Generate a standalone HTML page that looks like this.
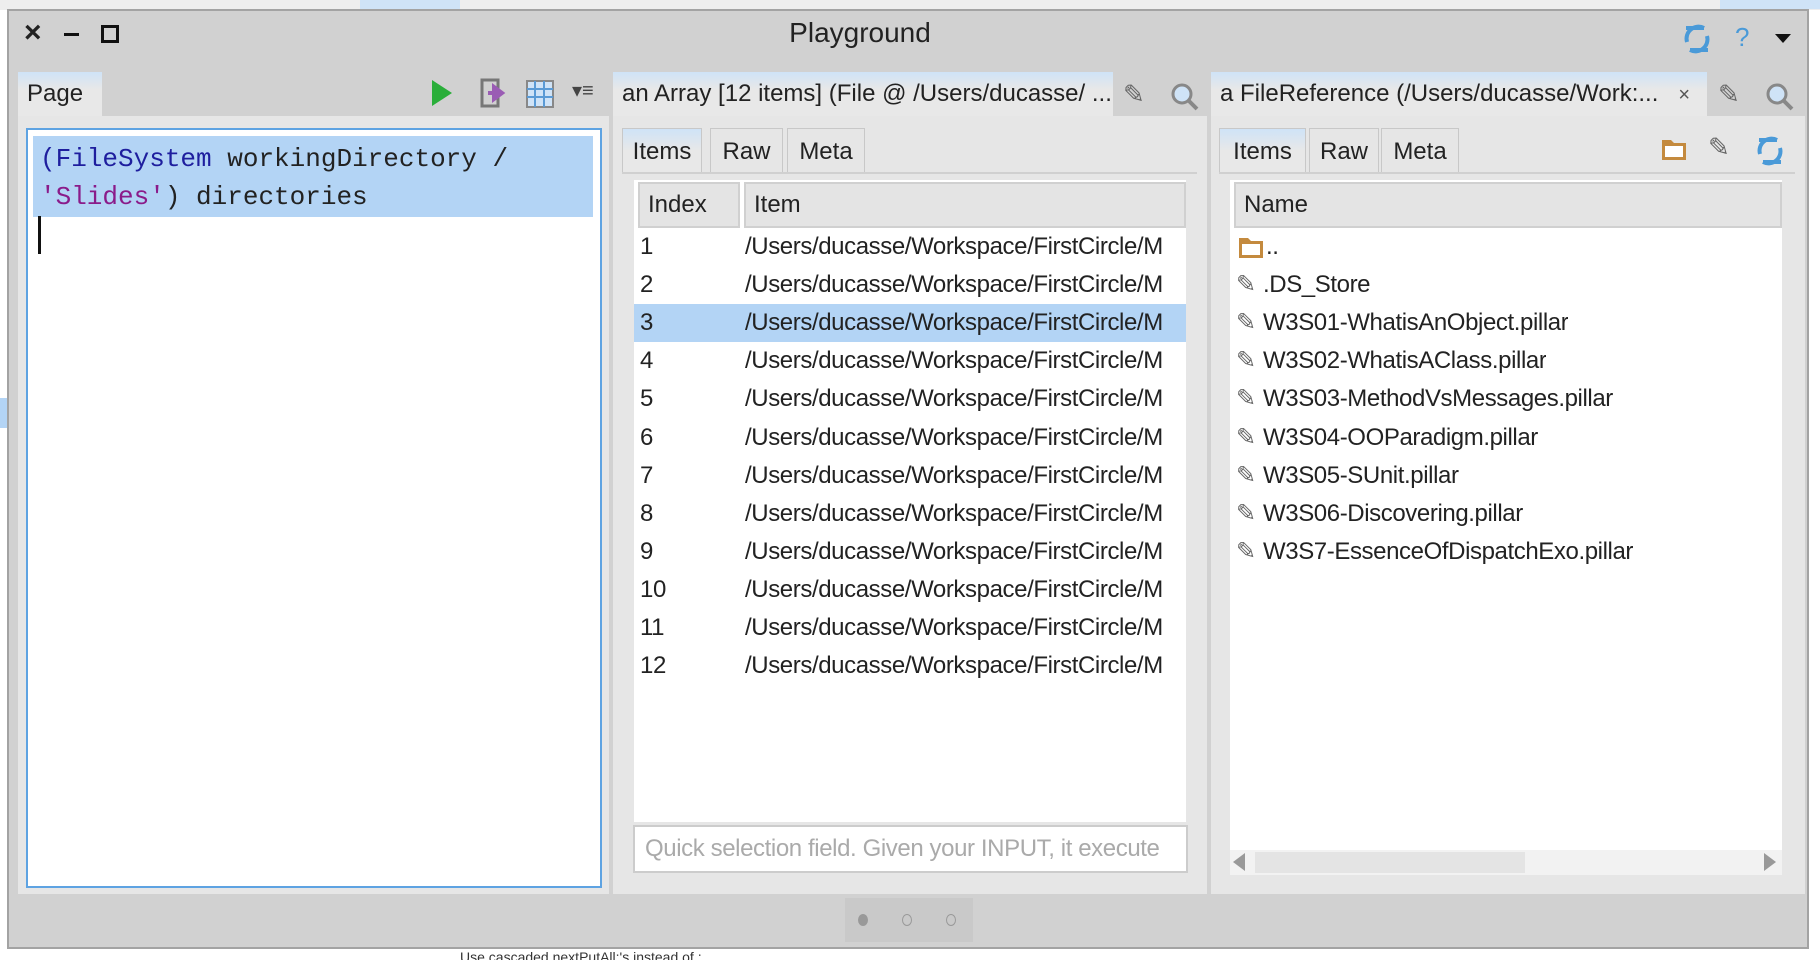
<!DOCTYPE html>
<html><head><meta charset="utf-8"><style>
*{box-sizing:border-box;margin:0;padding:0}
body{width:1820px;height:960px;overflow:hidden;background:#fff;font-family:"Liberation Sans",sans-serif;position:relative;color:#222}
.a{position:absolute}
.win{left:7px;top:9px;width:1802px;height:940px;background:#d1d1d1;border:2px solid #a3a3a3}
.panel{background:#e6e6e6}
.tab{background:linear-gradient(#cfe3f7,#e8e8e8 40%);font-size:24px;line-height:44px;padding-left:9px;white-space:nowrap;overflow:hidden}
.sub{font-size:24px;line-height:46px;text-align:center;border:1px solid #c8c8c8;background:#e6e6e6}
.sub.on{background:linear-gradient(#cfe3f7,#e8e8e8 50%)}
.row{position:absolute;font-size:24px;height:38px;line-height:38px;white-space:nowrap;overflow:hidden;letter-spacing:-0.4px}
.hdr{background:#e4e4e4;border:2px solid #d0d0d0;font-size:24px;line-height:42px;padding-left:8px}
</style></head><body>
<div class="a" style="left:0;top:0;width:1820px;height:10px;background:#eee"></div>
<div class="a" style="left:360px;top:0;width:100px;height:9px;background:#cfe3f7"></div>
<div class="a" style="left:1720px;top:0;width:100px;height:9px;background:#cfe3f7"></div>
<div class="a" style="left:0;top:398px;width:7px;height:30px;background:#b3d4f5"></div>
<div class="a" style="left:460px;top:949px;width:660px;height:11px;font-size:14px;overflow:hidden;color:#333">Use cascaded nextPutAll:'s instead of ;</div>

<div class="a win"></div>
<div class="a" style="left:24px;top:16px;font-size:30px;font-weight:bold">×</div>
<div class="a" style="left:64px;top:33px;width:15px;height:3px;background:#111"></div>
<div class="a" style="left:101px;top:25px;width:18px;height:18px;border:3px solid #111"></div>
<div class="a" style="left:760px;top:17px;width:200px;text-align:center;font-size:28px">Playground</div>
<svg class="a" style="left:1682px;top:22px" width="30" height="34" viewBox="0 0 30 34"><path d="M22 6A12 12 0 0 0 5 20M8 28A12 12 0 0 0 25 14M4 6h18M8 28h18" stroke="#4a9ad8" stroke-width="4" fill="none"/></svg>
<div class="a" style="left:1735px;top:22px;font-size:26px;color:#4a9ad8">?</div>
<svg class="a" style="left:1775px;top:34px" width="16" height="10"><path d="M0 0h16L8 9z" fill="#111"/></svg>

<div class="a panel" style="left:18px;top:116px;width:591px;height:778px"></div>
<div class="a tab" style="left:18px;top:72px;width:84px;height:44px">Page</div>
<svg class="a" style="left:430px;top:78px" width="24" height="30"><path d="M2 2L22 15L2 28z" fill="#2aae3a"/></svg>
<svg class="a" style="left:480px;top:78px" width="28" height="30"><rect x="2" y="2" width="16" height="26" fill="none" stroke="#777" stroke-width="3"/><path d="M8 15h10M14 9l8 6-8 6z" stroke="#9a5cb4" stroke-width="4" fill="#9a5cb4"/></svg>
<svg class="a" style="left:526px;top:80px" width="28" height="28"><rect x="1" y="1" width="26" height="26" fill="#cfe3f7" stroke="#888" stroke-width="2"/><path d="M9 1v26M18 1v26M1 9h26M1 17h26" stroke="#5a9ad5" stroke-width="2"/></svg>
<div class="a" style="left:572px;top:78px;font-size:20px;color:#444">▾≡</div>
<div class="a" style="left:26px;top:128px;width:576px;height:760px;background:#fff;border:2px solid #5ea3e2"></div>
<div class="a" style="left:33px;top:136px;width:560px;height:81px;background:#b3d4f5"></div>
<div class="a" style="left:40px;top:140px;font-family:'Liberation Mono',monospace;font-size:26px;line-height:38px;white-space:pre"><span style="color:#1e1e9e">(FileSystem</span> workingDirectory /
<span style="color:#8a1b8a">'Slides'</span>) directories</div>
<div class="a" style="left:38px;top:216px;width:3px;height:38px;background:#111"></div>

<div class="a panel" style="left:613px;top:116px;width:594px;height:778px"></div>
<div class="a tab" style="left:613px;top:72px;width:500px;height:44px">an Array [12 items] (File @ /Users/ducasse/ ...</div>
<div class="a" style="left:1123px;top:79px;font-size:26px;color:#666">✎</div>
<svg class="a" style="left:1170px;top:82px" width="30" height="30"><circle cx="12" cy="12" r="9" fill="#cfe3f7" stroke="#888" stroke-width="3"/><path d="M18 18l9 9" stroke="#888" stroke-width="4"/></svg>
<div class="a sub on" style="left:622px;top:128px;width:80px;height:46px">Items</div>
<div class="a sub" style="left:710px;top:128px;width:73px;height:46px">Raw</div>
<div class="a sub" style="left:787px;top:128px;width:78px;height:46px">Meta</div>
<div class="a" style="left:622px;top:172px;width:575px;height:2px;background:#d0d0d0"></div>
<div class="a" style="left:634px;top:180px;width:552px;height:642px;background:#fff"></div>
<div class="a hdr" style="left:638px;top:182px;width:102px;height:46px">Index</div>
<div class="a hdr" style="left:744px;top:182px;width:442px;height:46px">Item</div>
<div class="a" style="left:634px;top:304px;width:552px;height:38px;background:#b3d4f5"></div>
<div id="mid"></div>
<div class="a" style="left:633px;top:825px;width:555px;height:48px;background:#fff;border:2px solid #ccc;font-size:24px;line-height:44px;color:#aaa;padding-left:10px;white-space:nowrap;overflow:hidden;letter-spacing:-0.4px">Quick selection field. Given your INPUT, it execute</div>

<div class="a panel" style="left:1211px;top:116px;width:594px;height:778px"></div>
<div class="a tab" style="left:1211px;top:72px;width:496px;height:44px">a FileReference (/Users/ducasse/Work:...&nbsp;&nbsp;&nbsp;<span style="font-size:20px;color:#555">×</span></div>
<div class="a" style="left:1718px;top:79px;font-size:26px;color:#666">✎</div>
<svg class="a" style="left:1765px;top:82px" width="30" height="30"><circle cx="12" cy="12" r="9" fill="#cfe3f7" stroke="#888" stroke-width="3"/><path d="M18 18l9 9" stroke="#888" stroke-width="4"/></svg>
<div class="a sub on" style="left:1219px;top:128px;width:87px;height:46px">Items</div>
<div class="a sub" style="left:1309px;top:128px;width:70px;height:46px">Raw</div>
<div class="a sub" style="left:1381px;top:128px;width:78px;height:46px">Meta</div>
<div class="a" style="left:1219px;top:172px;width:576px;height:2px;background:#d0d0d0"></div>
<svg class="a" style="left:1660px;top:136px" width="28" height="26"><path d="M2 4h9l3 3h12v17H2z" fill="#c48a3e"/><rect x="5" y="10" width="18" height="11" fill="#fff"/></svg>
<div class="a" style="left:1708px;top:132px;font-size:26px;color:#666">✎</div>
<svg class="a" style="left:1755px;top:134px" width="30" height="34" viewBox="0 0 30 34"><path d="M22 6A12 12 0 0 0 5 20M8 28A12 12 0 0 0 25 14M4 6h18M8 28h18" stroke="#4a9ad8" stroke-width="4" fill="none"/></svg>
<div class="a" style="left:1230px;top:180px;width:552px;height:670px;background:#fff"></div>
<div class="a hdr" style="left:1234px;top:182px;width:548px;height:46px">Name</div>
<div id="rt"></div>
<div class="a" style="left:1230px;top:850px;width:552px;height:25px;background:#f2f2f2"></div>
<div class="a" style="left:1255px;top:852px;width:270px;height:21px;background:#e4e4e4"></div>
<svg class="a" style="left:1233px;top:853px" width="14" height="18"><path d="M12 0v18L0 9z" fill="#999"/></svg>
<svg class="a" style="left:1762px;top:853px" width="14" height="18"><path d="M2 0v18L14 9z" fill="#999"/></svg>

<div class="a" style="left:845px;top:898px;width:128px;height:44px;background:#c9c9c9"></div>
<div class="a" style="left:858px;top:914px;width:10px;height:12px;border-radius:50%;background:#999"></div>
<div class="a" style="left:902px;top:914px;width:10px;height:12px;border-radius:50%;border:1px solid #999"></div>
<div class="a" style="left:946px;top:914px;width:10px;height:12px;border-radius:50%;border:1px solid #999"></div>

<script>
var m='',p='/Users/ducasse/Workspace/FirstCircle/M';
for(var i=1;i<=12;i++){var y=228+(i-1)*38.1;
m+='<div class="row" style="left:640px;top:'+y+'px;width:90px">'+i+'</div><div class="row" style="left:745px;top:'+y+'px;width:440px">'+p+'</div>';}
document.getElementById('mid').outerHTML=m;
var n=['.DS_Store','W3S01-WhatisAnObject.pillar','W3S02-WhatisAClass.pillar','W3S03-MethodVsMessages.pillar','W3S04-OOParadigm.pillar','W3S05-SUnit.pillar','W3S06-Discovering.pillar','W3S7-EssenceOfDispatchExo.pillar'];
var r='<svg class="a" style="left:1237px;top:234px" width="28" height="26"><path d="M2 4h9l3 3h12v17H2z" fill="#c48a3e"/><rect x="5" y="10" width="18" height="11" fill="#fff"/></svg><div class="row" style="left:1266px;top:228px">..</div>';
for(var j=0;j<n.length;j++){var y=228+(j+1)*38.1;
r+='<div class="row" style="left:1236px;top:'+y+'px;color:#666">✎</div><div class="row" style="left:1263px;top:'+y+'px">'+n[j]+'</div>';}
document.getElementById('rt').outerHTML=r;
</script>
</body></html>
